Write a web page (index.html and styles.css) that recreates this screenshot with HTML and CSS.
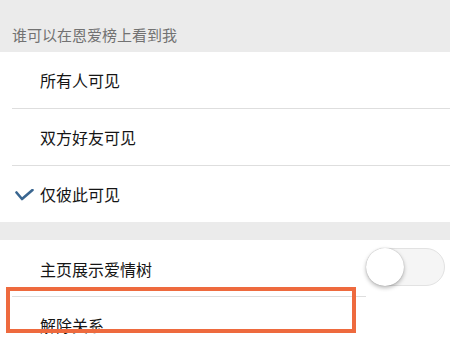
FILE: index.html
```html
<!DOCTYPE html>
<html lang="zh">
<head>
<meta charset="utf-8">
<link rel="stylesheet" href="styles.css">
</head>
<body>
<div class="page">
  <div class="section-head">谁可以在恩爱榜上看到我</div>
  <div class="group">
    <div class="row"><span class="label">所有人可见</span></div>
    <div class="row"><span class="label">双方好友可见</span></div>
    <div class="row last">
      <svg class="check" width="19" height="12" viewBox="0 0 19 12"><path d="M1.5 3.5 L7 10 L17.5 1" fill="none" stroke="#3a6690" stroke-width="2.6" stroke-linecap="round" stroke-linejoin="round"/></svg>
      <span class="label">仅彼此可见</span>
    </div>
  </div>
  <div class="gap"></div>
  <div class="group">
    <div class="row toggle-row">
      <span class="label">主页展示爱情树</span>
      <span class="switch"><span class="knob"></span></span>
    </div>
    <div class="row last"><span class="label">解除关系</span></div>
  </div>
  <div class="highlight"></div>
</div>
</body>
</html>
```
FILE: styles.css
```css
html, body {
  margin: 0;
  padding: 0;
  background: #ffffff;
}
body {
  font-family: "Noto Sans CJK SC", "Noto Sans", sans-serif;
  width: 450px;
  height: 337px;
  overflow: hidden;
}
.page {
  position: relative;
  height: 337px;
  overflow: hidden;
}
.section-head {
  height: 52px;
  box-sizing: border-box;
  background: #ebebeb;
  padding: 25px 0 0 12px;
  font-size: 15px;
  line-height: 20px;
  color: #727272;
}
.group {
  background: #ffffff;
}
.row {
  position: relative;
  height: 57px;
  box-sizing: border-box;
  display: flex;
  align-items: center;
  margin-left: 12px;
  padding-left: 28px;
  border-bottom: 1px solid #dedede;
}
.row.last {
  border-bottom: none;
  height: 56px;
}
.label {
  font-size: 16px;
  line-height: 20px;
  color: #151515;
}
.check {
  position: absolute;
  left: 3px;
  top: 23px;
}
.gap {
  height: 18px;
  background: #ebebeb;
}
.toggle-row {
  justify-content: space-between;
  padding-right: 5px;
  border-bottom: none;
}
.toggle-row::after {
  content: "";
  position: absolute;
  left: 0;
  right: 84px;
  bottom: 0;
  height: 1px;
  background: #dedede;
}
.switch {
  position: relative;
  width: 79px;
  height: 38px;
  box-sizing: border-box;
  border-radius: 19px;
  background: #f5f5f5;
  border: 1px solid #e2e2e2;
  margin-top: -4px;
}
.knob {
  position: absolute;
  left: -1px;
  top: -1px;
  width: 38px;
  height: 38px;
  border-radius: 50%;
  background: #ffffff;
  box-shadow: 0 2px 4px rgba(0,0,0,0.28), 0 0 1px rgba(0,0,0,0.3);
}
.highlight {
  position: absolute;
  left: 6px;
  top: 287px;
  width: 350px;
  height: 46px;
  box-sizing: border-box;
  border: 4.5px solid #ee6a3e;
}
```
